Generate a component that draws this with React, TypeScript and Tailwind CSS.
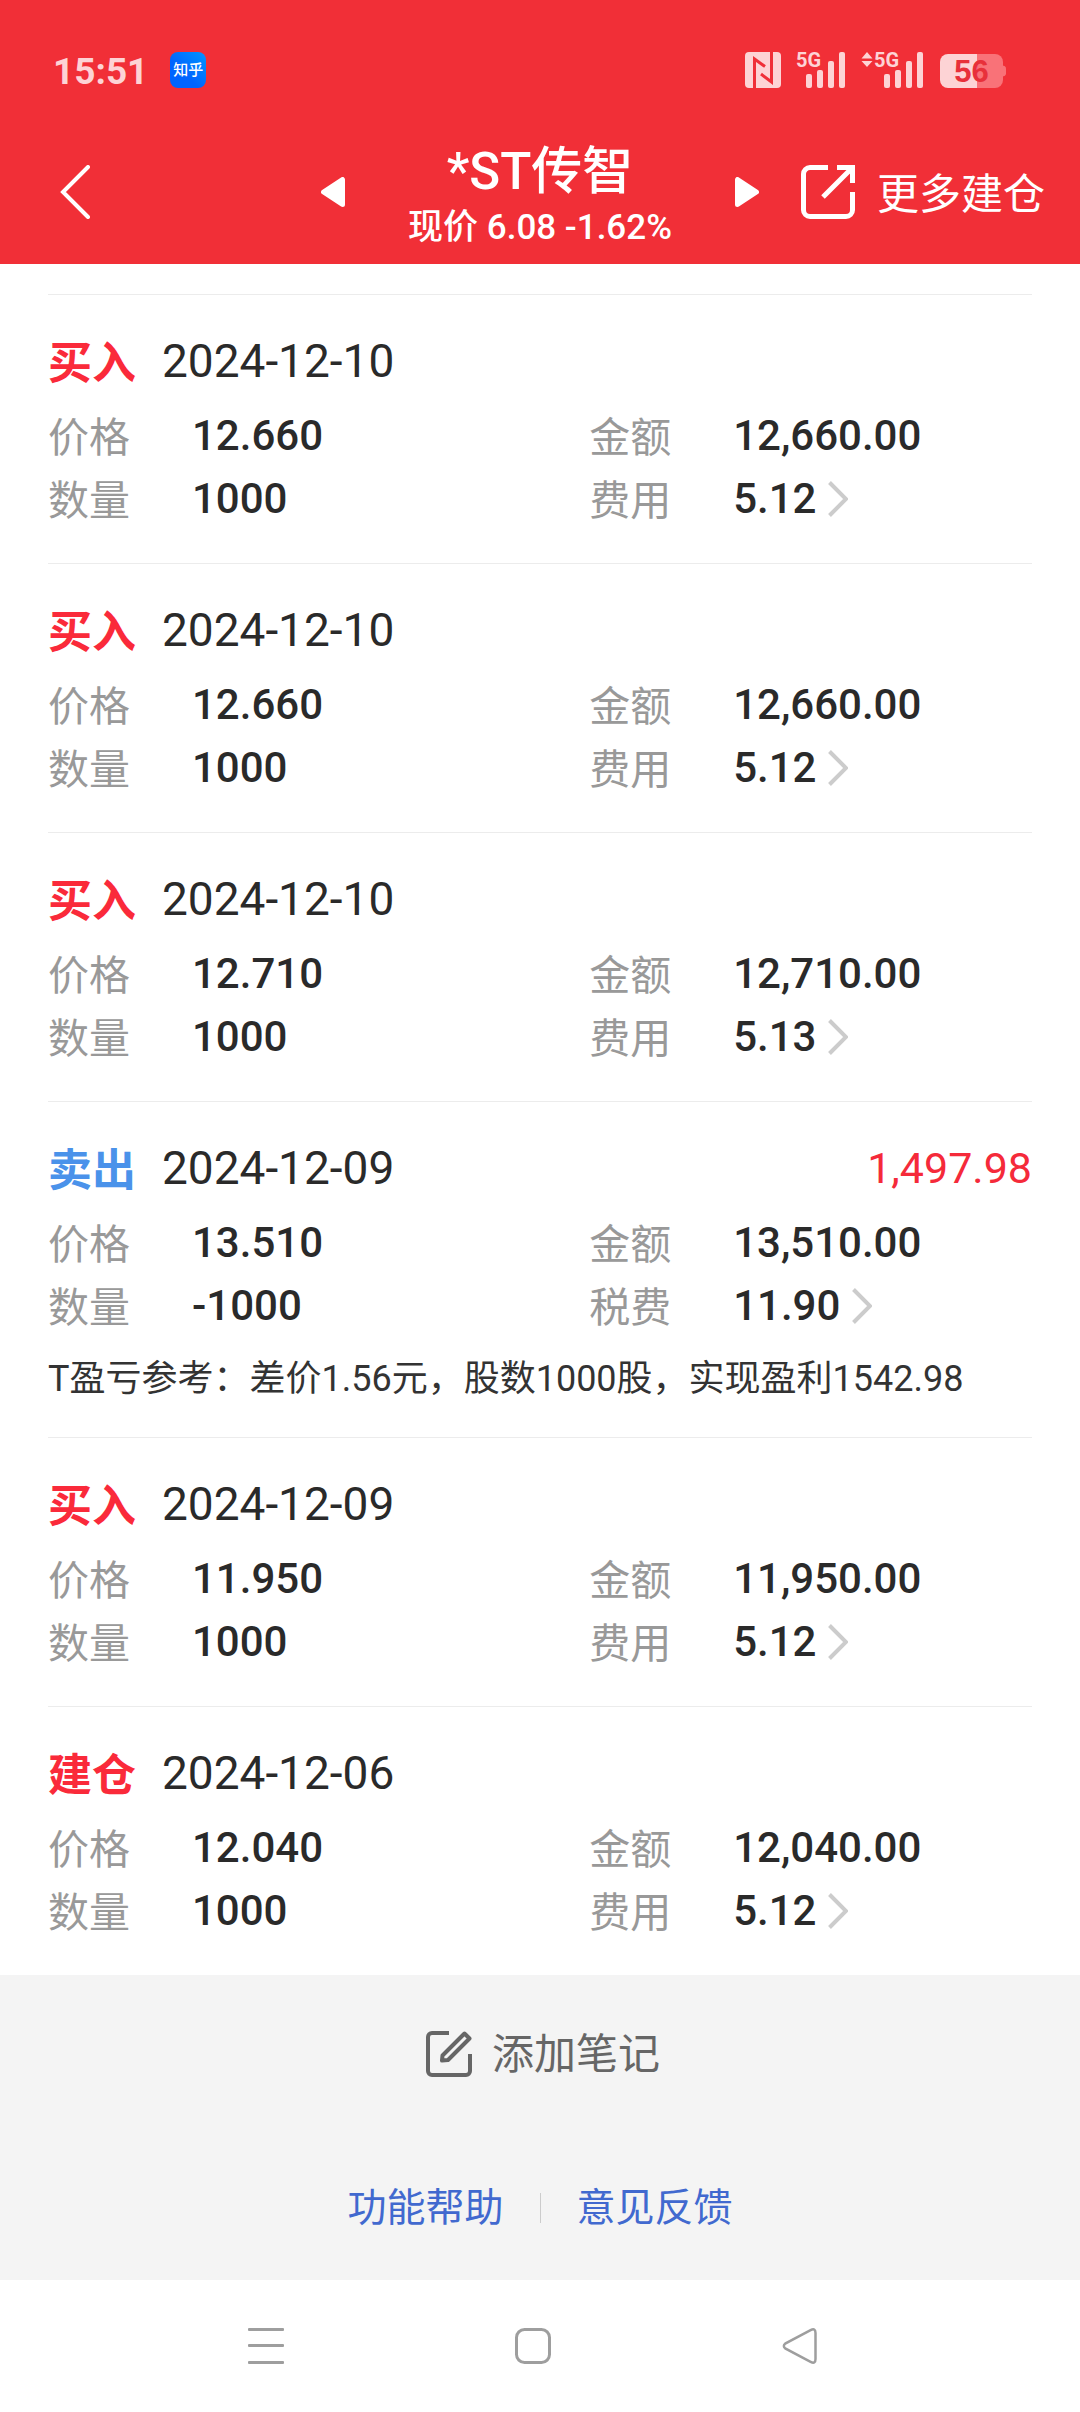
type Trade = {
  kind: string;
  date: string;
  price: string;
  amount: string;
  quantity: string;
  feeLabel: string;
  fee: string;
  profit?: string;
  note?: string;
};

const trades: Trade[] = [
  { kind: "买入", date: "2024-12-10", price: "12.660", amount: "12,660.00", quantity: "1000", feeLabel: "费用", fee: "5.12" },
  { kind: "买入", date: "2024-12-10", price: "12.660", amount: "12,660.00", quantity: "1000", feeLabel: "费用", fee: "5.12" },
  { kind: "买入", date: "2024-12-10", price: "12.710", amount: "12,710.00", quantity: "1000", feeLabel: "费用", fee: "5.13" },
  {
    kind: "卖出",
    date: "2024-12-09",
    price: "13.510",
    amount: "13,510.00",
    quantity: "-1000",
    feeLabel: "税费",
    fee: "11.90",
    profit: "1,497.98",
    note: "T盈亏参考：差价1.56元，股数1000股，实现盈利1542.98",
  },
  { kind: "买入", date: "2024-12-09", price: "11.950", amount: "11,950.00", quantity: "1000", feeLabel: "费用", fee: "5.12" },
  { kind: "建仓", date: "2024-12-06", price: "12.040", amount: "12,040.00", quantity: "1000", feeLabel: "费用", fee: "5.12" },
];

function Signal({ x }: { x: number }) {
  return (
    <g transform={`translate(${x} 0)`}>
      <text x="-1" y="16" fontSize="20" fontWeight="700">
        5G
      </text>
      <rect x="9" y="23" width="6" height="14" rx="2" />
      <rect x="20" y="19" width="6" height="18" rx="2" />
      <rect x="31" y="10" width="6" height="27" rx="2" />
      <rect x="42" y="1" width="6" height="36" rx="2" />
    </g>
  );
}

function StatusBar() {
  return (
    <div className="flex h-[120px] items-center justify-between pt-5 pr-[74px] pl-[53px]">
      <div className="flex items-center gap-[22px]">
        <time className="pt-0.5 text-[37px] leading-none font-bold text-[#fdd3d5]">15:51</time>
        <span className="flex size-9 items-center justify-center rounded-lg bg-linear-to-bl from-[#0a94ff] to-[#0064ff] to-60% text-[15px] leading-none font-medium text-white">
          知乎
        </span>
      </div>
      <svg width="262" height="50" viewBox="0 -6 262 50" fill="#fdd3d5" role="img" aria-label="NFC 5G 56%">
        <rect x="1" y="1" width="36" height="36" rx="4" />
        <path
          d="M10.500 37V8L21 15.500M27.500 1V31L17 23"
          fill="none"
          stroke="#f02f38"
          strokeWidth="3"
        />
        <Signal x={53} />
        <path d="M117.500 7.500L123 1L128.500 7.500ZM117.500 10L123 16L128.500 10Z" />
        <Signal x={131} />
        <path d="M258 14.500c2.500 0 4 1 4 3v5c0 2-1.500 3-4 3z" fill="#f97278" />
        <path d="M233 3h18a8 8 0 0 1 8 8v18a8 8 0 0 1-8 8h-18z" fill="#f97278" />
        <path d="M233 3v34h-29a8 8 0 0 1-8-8V11a8 8 0 0 1 8-8z" />
        <text x="227.500" y="31" fontSize="31" fontWeight="700" textAnchor="middle" fontFamily="'Liberation Sans', sans-serif" fill="#e8303a">
          56
        </text>
      </svg>
    </div>
  );
}

function TitleBar() {
  return (
    <div className="grid h-36 grid-cols-[1fr_auto_1fr] items-center text-white">
      <button aria-label="返回" className="w-fit pl-[60px]">
        <svg width="30" height="54" viewBox="0 0 30 54" fill="none" stroke="currentColor" strokeWidth="4" strokeLinecap="round">
          <path d="M28 2L3 27L28 52" />
        </svg>
      </button>
      <div className="flex w-[438px] items-center justify-between">
        <button aria-label="上一只">
          <svg width="24" height="30" viewBox="0 0 24 30" fill="currentColor" stroke="currentColor" strokeWidth="5" strokeLinejoin="round">
            <path d="M2.500 15L21.500 2.500V27.500Z" />
          </svg>
        </button>
        <div className="flex flex-col items-center pt-1.5 font-medium whitespace-nowrap">
          <h1 className="text-[51px] leading-[66px]">*ST传智</h1>
          <p className="text-[35px] leading-[46px]">现价 6.08 -1.62%</p>
        </div>
        <button aria-label="下一只">
          <svg width="24" height="30" viewBox="0 0 24 30" fill="currentColor" stroke="currentColor" strokeWidth="5" strokeLinejoin="round">
            <path d="M21.500 15L2.500 2.500V27.500Z" />
          </svg>
        </button>
      </div>
      <button className="flex items-center gap-[22px] pl-[42px] text-[42px] leading-none whitespace-nowrap">
        <svg width="54" height="54" viewBox="0 0 54 54" fill="none" stroke="currentColor" strokeWidth="5">
          <path d="M27 2.500H9A6.500 6.500 0 0 0 2.500 9V45A6.500 6.500 0 0 0 9 51.500H45A6.500 6.500 0 0 0 51.500 45V27" />
          <path d="M36 2.500H51.500V18M51 3L22 32" />
        </svg>
        <span className="pt-1.5">更多建仓</span>
      </button>
    </div>
  );
}

const kindColor: Record<string, string> = {
  买入: "text-[#fa2a3a]",
  建仓: "text-[#fa2a3a]",
  卖出: "text-[#4a92ea]",
};

function Field({ label, value, link }: { label: string; value: string; link?: boolean }) {
  return (
    <div className="flex items-center">
      <dt className="w-36 text-[41px] leading-[63px] text-[#999]">{label}</dt>
      <dd className="pb-1.5 text-[42px] leading-[57px] font-medium text-[#2a2a2a]">
        {link ? (
          <button className="flex items-center gap-3">
            {value}
            <svg width="20" height="36" viewBox="0 0 20 36" fill="none" stroke="#ccc" strokeWidth="4">
              <path d="M1.500 1.500L18 18L1.500 34.500" />
            </svg>
          </button>
        ) : (
          value
        )}
      </dd>
    </div>
  );
}

function TradeItem({ trade }: { trade: Trade }) {
  return (
    <li className="border-t border-[#ececec] pt-[38px] pb-[30px]">
      <div className="flex items-center">
        <h2 className={`text-[44px] leading-[63px] font-bold ${kindColor[trade.kind]}`}>{trade.kind}</h2>
        <time className="ml-[26px] pb-1.5 text-[46px] leading-[57px] text-[#2a2a2a]">{trade.date}</time>
        {trade.profit && (
          <span className="ml-auto pb-1.5 text-[43px] leading-[57px] text-[#f52a3a]">{trade.profit}</span>
        )}
      </div>
      <dl className="mt-[11px] grid grid-cols-[55%_45%]">
        <Field label="价格" value={trade.price} />
        <Field label="金额" value={trade.amount} />
        <Field label="数量" value={trade.quantity} />
        <Field label={trade.feeLabel} value={trade.fee} link />
      </dl>
      {trade.note && <p className="mt-3 text-[36px] leading-[55px] text-[#333]">{trade.note}</p>}
    </li>
  );
}

function Footer() {
  return (
    <footer className="flex flex-col items-center bg-[#f4f4f4] pt-12 pb-11">
      <button className="flex items-center gap-5 pl-1.5 text-[42px] leading-[60px] text-[#666]">
        <svg width="46" height="46" viewBox="0 0 46 46" fill="none" stroke="currentColor" strokeWidth="4">
          <path d="M23 2H6A4 4 0 0 0 2 6V40A4 4 0 0 0 6 44H40A4 4 0 0 0 44 40V23" />
          <path d="M38.500 2.500L43.500 7.500L22 29L16 29.500L16.500 24.500Z" strokeLinejoin="round" />
        </svg>
        <span className="pt-0.5">添加笔记</span>
      </button>
      <nav className="mt-[95px] flex items-center text-[39px] leading-[56px] text-[#4169cf]">
        <a href="#help">功能帮助</a>
        <span className="mx-9 h-[30px] w-px bg-[#ccc]" />
        <a href="#feedback">意见反馈</a>
      </nav>
    </footer>
  );
}

function SystemNav() {
  return (
    <nav className="flex h-[132px] items-center justify-center gap-[231px] bg-white pr-3.5">
      <button aria-label="最近任务">
        <svg width="36" height="36" viewBox="0 0 36 36" fill="#9e9e9e">
          <rect width="36" height="3" rx="1" />
          <rect y="16" width="36" height="3" rx="1" />
          <rect y="33" width="36" height="3" rx="1" />
        </svg>
      </button>
      <button aria-label="主屏幕">
        <svg width="36" height="36" viewBox="0 0 36 36" fill="none" stroke="#9e9e9e" strokeWidth="3">
          <rect x="1.500" y="1.500" width="33" height="33" rx="8" />
        </svg>
      </button>
      <button aria-label="返回上一页">
        <svg width="36" height="36" viewBox="0 0 36 36" fill="none" stroke="#9e9e9e" strokeWidth="2.500">
          <path d="M28.600 2.200L3.200 15.600Q0.500 18 3.200 20.400L28.600 33.800Q33.500 36.500 33.500 31V5Q33.500 -0.500 28.600 2.200Z" />
        </svg>
      </button>
    </nav>
  );
}

export default function App() {
  return (
    <div className="bg-white font-[Roboto,'Noto_Sans_CJK_SC',sans-serif]" lang="zh-CN">
      <header className="bg-[#f12f37]">
        <StatusBar />
        <TitleBar />
      </header>
      <main>
        <ul className="px-12 pt-[30px]">
          {trades.map((trade, i) => (
            <TradeItem key={i} trade={trade} />
          ))}
        </ul>
      </main>
      <Footer />
      <SystemNav />
    </div>
  );
}
